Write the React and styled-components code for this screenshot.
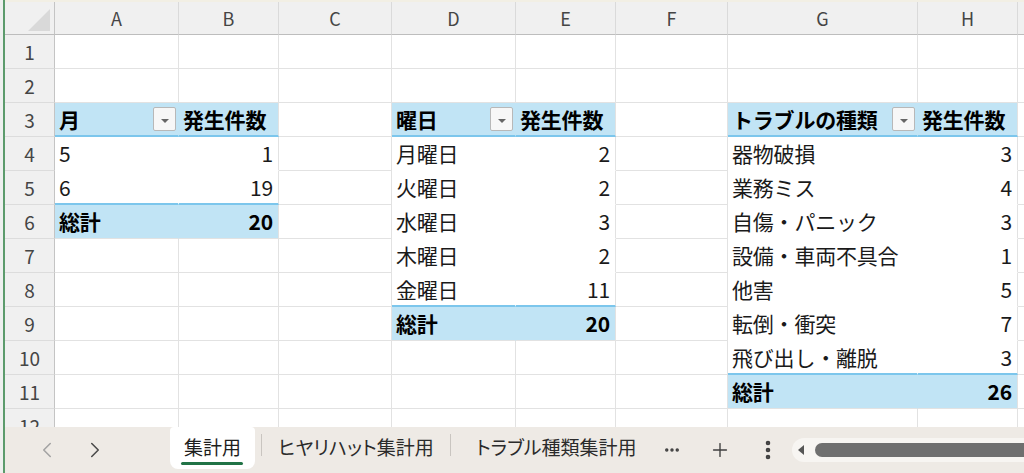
import React from 'react';
import styled, { createGlobalStyle } from 'styled-components';
import { ChevronLeft, ChevronRight, Ellipsis, Plus, EllipsisVertical } from 'lucide-react';

const GlobalStyle = createGlobalStyle`
	html, body {
		margin: 0;
		padding: 0;
	}
	body {
		font-family: "Noto Sans CJK JP", "Noto Sans", sans-serif;
		background: #f0f0f0;
	}
	* {
		box-sizing: border-box;
	}
`;

const COLUMNS = [
	{ name: 'A', width: 124 },
	{ name: 'B', width: 100 },
	{ name: 'C', width: 113 },
	{ name: 'D', width: 124 },
	{ name: 'E', width: 100 },
	{ name: 'F', width: 112 },
	{ name: 'G', width: 190 },
	{ name: 'H', width: 100 },
	{ name: 'I', width: 120 },
];

const ROW_COUNT = 12;

const PIVOTS = [
	{
		col: 0,
		row: 3,
		title: '月',
		rows: [
			['5', 1],
			['6', 19],
		],
		total: 20,
	},
	{
		col: 3,
		row: 3,
		title: '曜日',
		rows: [
			['月曜日', 2],
			['火曜日', 2],
			['水曜日', 3],
			['木曜日', 2],
			['金曜日', 11],
		],
		total: 20,
	},
	{
		col: 6,
		row: 3,
		title: 'トラブルの種類',
		rows: [
			['器物破損', 3],
			['業務ミス', 4],
			['自傷・パニック', 3],
			['設備・車両不具合', 1],
			['他害', 5],
			['転倒・衝突', 7],
			['飛び出し・離脱', 3],
		],
		total: 26,
	},
];

// work out what a pivot table puts in a given sheet cell
const cellAt = (r, c) => {
	for (const p of PIVOTS) {
		const last = p.row + p.rows.length + 1;
		if (c < p.col || c > p.col + 1 || r < p.row || r > last) continue;
		const first = c === p.col;
		if (r === p.row) {
			return { kind: 'head', first, text: first ? p.title : '発生件数', menu: first };
		}
		if (r === last) {
			return { kind: 'total', first, text: first ? '総計' : p.total };
		}
		const [label, count] = p.rows[r - p.row - 1];
		return { kind: r === last - 1 ? 'lastBody' : 'body', first, text: first ? label : count };
	}
	return null;
};

const App = () => {
	const rows = Array.from({ length: ROW_COUNT }, (_, i) => i + 1);

	return (
		<Window>
			<GlobalStyle />
			<Sheet>
				<GridArea>
					<Grid>
						<Corner>
							<CornerMark />
						</Corner>
						{COLUMNS.map(col => (
							<ColumnHead key={col.name}>{col.name}</ColumnHead>
						))}
						{rows.map(r => (
							<React.Fragment key={r}>
								<RowHead>{r}</RowHead>
								{COLUMNS.map((col, c) => {
									const info = cellAt(r, c);
									if (!info) return <Cell key={col.name} />;
									const filled = info.kind === 'head' || info.kind === 'total';
									const numeric = !info.first && info.kind !== 'head';
									let edge = 'grid';
									if (info.kind === 'head' || info.kind === 'lastBody') edge = 'blue';
									if (info.kind === 'body') edge = 'none';
									return (
										<Cell
											key={col.name}
											$fill={filled}
											$strong={filled}
											$align={numeric ? 'right' : 'left'}
											$joined={info.first}
											$edge={edge}
										>
											<CellText>{info.text}</CellText>
											{info.menu && (
												<FilterButton>
													<FilterArrow />
												</FilterButton>
											)}
										</Cell>
									);
								})}
							</React.Fragment>
						))}
					</Grid>
				</GridArea>
				<TabBar>
					<NavButton $muted>
						<ChevronLeft size={26} strokeWidth={1.4} />
					</NavButton>
					<NavButton>
						<ChevronRight size={26} strokeWidth={1.4} />
					</NavButton>
					<ActiveTab>集計用</ActiveTab>
					<TabDivider />
					<Tab $width={188}>ヒヤリハット集計用</Tab>
					<TabDivider $gap={0} />
					<Tab $width={197} $start>
						トラブル種類集計用
					</Tab>
					<IconButton>
						<Ellipsis size={18} strokeWidth={2.6} />
					</IconButton>
					<IconButton>
						<Plus size={22} strokeWidth={1.5} />
					</IconButton>
					<IconButton>
						<EllipsisVertical size={24} strokeWidth={2.6} />
					</IconButton>
					<ScrollTrack>
						<ScrollArrow />
						<ScrollThumb />
					</ScrollTrack>
				</TabBar>
			</Sheet>
		</Window>
	);
};

const Window = styled.div`
	width: 1024px;
	height: 473px;
	padding-left: 3px;
	background: #eef0ef;
	overflow: hidden;
`;

const Sheet = styled.div`
	height: 100%;
	display: flex;
	flex-direction: column;
	border-left: 2px solid #5c9b6c;
	background: #fff;
`;

const GridArea = styled.div`
	flex: 1;
	min-height: 0;
	overflow: hidden;
	border-top: 2px solid #f2efe4;
`;

const Grid = styled.div`
	display: grid;
	grid-template-columns: 50px ${COLUMNS.map(c => `${c.width}px`).join(' ')};
	grid-template-rows: 33px repeat(${ROW_COUNT}, 34px);
`;

const HeadBase = styled.div`
	display: flex;
	align-items: center;
	justify-content: center;
	background: #f0f0f0;
	color: #454545;
	line-height: 1;
`;

const Corner = styled(HeadBase)`
	align-items: flex-end;
	justify-content: flex-end;
	padding: 0 4px 3px 0;
	border-right: 1px solid #c4c4c4;
	border-bottom: 1px solid #bdbdbd;
`;

const CornerMark = styled.div`
	width: 22px;
	height: 22px;
	background: #d9d9d9;
	clip-path: polygon(100% 0, 100% 100%, 0 100%);
`;

const ColumnHead = styled(HeadBase)`
	font-size: 18px;
	border-right: 1px solid #dadada;
	border-bottom: 1px solid #bdbdbd;
`;

const RowHead = styled(HeadBase)`
	font-size: 19px;
	border-right: 1px solid #c4c4c4;
	border-bottom: 1px solid #dcdcdc;
`;

const Cell = styled.div`
	display: flex;
	align-items: center;
	justify-content: ${props => (props.$align === 'right' ? 'flex-end' : 'space-between')};
	padding: 0 ${props => (props.$align === 'right' ? '5px' : '2px')} 0 4px;
	font-size: 21px;
	line-height: 1;
	font-weight: ${props => (props.$strong ? 700 : 400)};
	color: ${props => (props.$strong ? '#000' : '#1a1a1a')};
	background: ${props => (props.$fill ? '#c1e4f5' : '#fff')};
	border-right: 1px solid ${props => (props.$joined ? 'transparent' : '#e2e2e2')};
	border-bottom: ${props => {
		if (props.$edge === 'blue') return '2px solid #7cc6ec';
		if (props.$edge === 'none') return '1px solid transparent';
		return '1px solid #e2e2e2';
	}};
	white-space: nowrap;
	overflow: hidden;
`;

const CellText = styled.span`
	display: block;
	letter-spacing: -0.2px;
`;

const FilterButton = styled.div`
	flex: none;
	width: 23px;
	height: 24px;
	display: flex;
	align-items: center;
	justify-content: center;
	padding-top: 3px;
	background: #f7f7f7;
	border: 1px solid #b8b8b8;
	border-radius: 2px;
`;

const FilterArrow = styled.div`
	width: 0;
	height: 0;
	border-left: 4px solid transparent;
	border-right: 4px solid transparent;
	border-top: 4px solid #666;
`;

const TabBar = styled.div`
	flex: none;
	height: 46px;
	display: flex;
	align-items: flex-start;
	padding-left: 18px;
	background: #eeeae5;
	color: #2b2b2b;
	font-size: 19px;
	line-height: 1;
	font-feature-settings: 'palt';
	white-space: nowrap;
`;

const NavButton = styled.div`
	width: 48px;
	height: 46px;
	display: flex;
	align-items: center;
	justify-content: center;
	color: ${props => (props.$muted ? '#a3a3a3' : '#4a4a4a')};
`;

const ActiveTab = styled.div`
	position: relative;
	width: 85px;
	height: 42px;
	margin-left: 51px;
	padding-bottom: 3px;
	display: flex;
	align-items: center;
	justify-content: center;
	background: #fff;
	border-radius: 4px 4px 8px 8px;
	color: #1d1d1d;

	&::after {
		content: '';
		position: absolute;
		left: 11px;
		right: 12px;
		bottom: 4px;
		height: 3px;
		border-radius: 2px;
		background: #217346;
	}
`;

const TabDivider = styled.div`
	width: 1px;
	height: 22px;
	margin: 7px 0 0 ${props => (props.$gap === undefined ? 6 : props.$gap)}px;
	background: #c9c5c0;
`;

const Tab = styled.div`
	width: ${props => props.$width}px;
	height: 42px;
	padding: 0 0 3px ${props => (props.$start ? '25px' : '0')};
	display: flex;
	align-items: center;
	justify-content: ${props => (props.$start ? 'flex-start' : 'center')};
`;

const IconButton = styled.div`
	width: 48px;
	height: 46px;
	display: flex;
	align-items: center;
	justify-content: center;
	color: #3f3f3f;
`;

const ScrollTrack = styled.div`
	flex: 1;
	height: 24px;
	margin-top: 11px;
	display: flex;
	align-items: center;
	padding-left: 6px;
	background: #f7f5f2;
	border-radius: 12px 0 0 12px;
`;

const ScrollArrow = styled.div`
	width: 0;
	height: 0;
	border-top: 5px solid transparent;
	border-bottom: 5px solid transparent;
	border-right: 6px solid #555;
`;

const ScrollThumb = styled.div`
	flex: 1;
	height: 14px;
	margin-left: 11px;
	background: #6f6f6f;
	border-radius: 7px 0 0 7px;
`;

export default App;
